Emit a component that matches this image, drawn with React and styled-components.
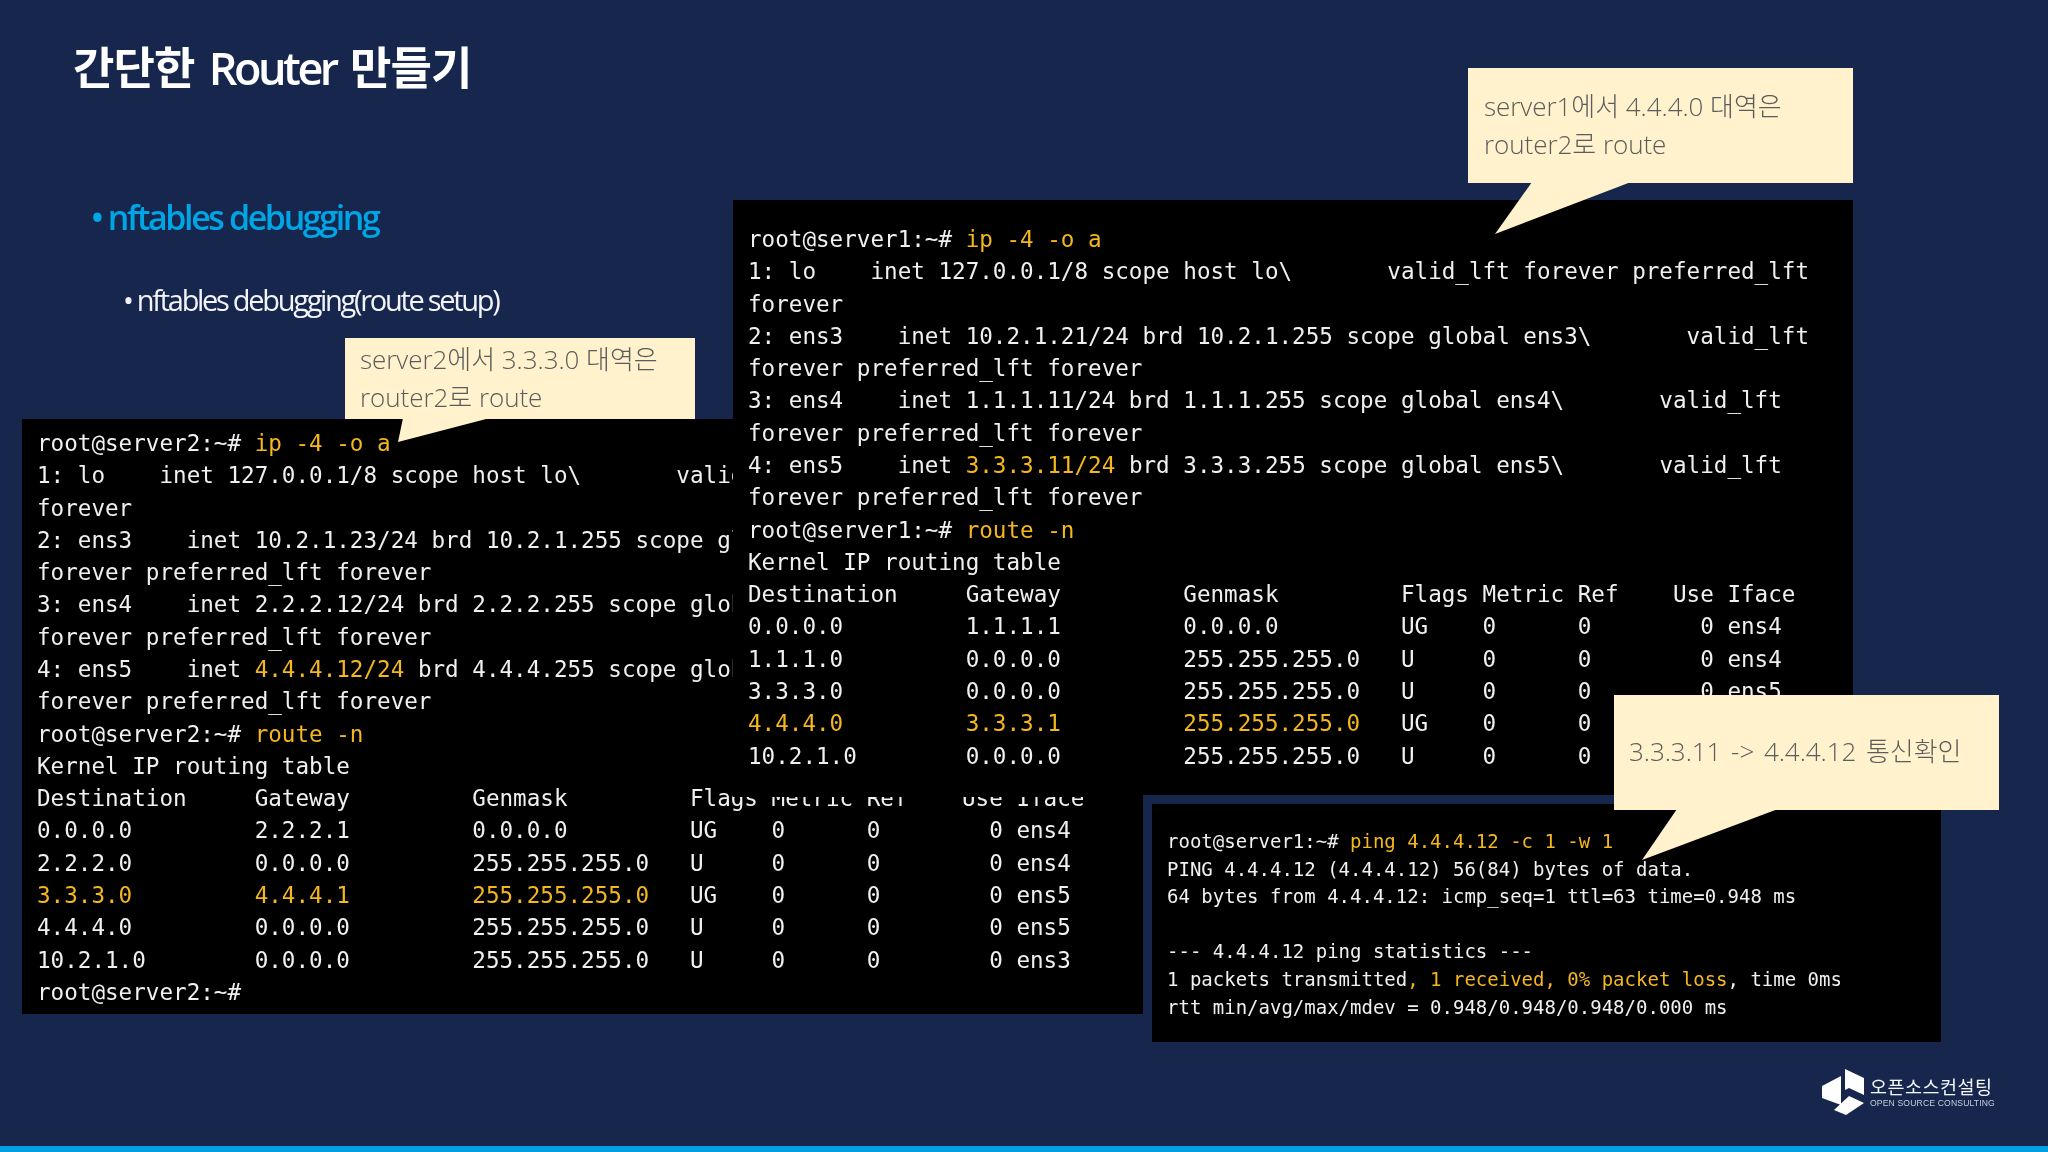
import React from "react";
import styled, { createGlobalStyle } from "styled-components";

const Global = createGlobalStyle`
  html, body { margin: 0; padding: 0; background: #16264c; }
`;

const Slide = styled.div`
  position: relative;
  width: 2048px;
  height: 1152px;
  overflow: hidden;
  display: flex;
  flex-direction: column;
  background: #16264c;
  font-family: "Open Sans", "Noto Sans CJK KR", sans-serif;
  filter: blur(0.3px);
`;

const Title = styled.h1`
  margin: 38px 0 0 73px;
  font-family: "Open Sans", "Noto Sans CJK KR", sans-serif;
  font-size: 45px;
  line-height: 60px;
  font-weight: 600;
  letter-spacing: -0.9px;
  word-spacing: 3.5px;
  color: #fff;
`;

const TitleLatin = styled.span`
  letter-spacing: -3.5px;
`;

const Bullets = styled.ul`
  list-style: none;
  margin: 0;
  padding: 0;
  display: flex;
  flex-direction: column;
`;

const Lead = styled.li`
  margin: 96px 0 0 91px;
  font-size: 34px;
  line-height: 46px;
  font-weight: 600;
  letter-spacing: -2.4px;
  color: #00a5e6;
`;

const Sub = styled.li`
  margin: 38px 0 0 123px;
  font-size: 29px;
  line-height: 44px;
  font-weight: 400;
  letter-spacing: -2.3px;
  color: #f2f4f8;
`;

const Terminal = styled.pre`
  position: absolute;
  margin: 0;
  box-sizing: border-box;
  overflow: hidden;
  background: #000;
  color: #f0f0f0;
  font-family: "DejaVu Sans Mono", monospace;
  font-size: 22.6px;
  line-height: 32.28px;
`;

const RouterWindow = styled(Terminal)`
  left: 22px;
  top: 419px;
  width: 1121px;
  height: 595px;
  padding: 8px 0 0 15px;
  z-index: 1;
`;

const ServerWindow = styled(Terminal)`
  left: 733px;
  top: 200px;
  width: 1120px;
  height: 597px;
  padding: 23px 0 0 15px;
  z-index: 3;
`;

const PingWindow = styled(Terminal)`
  left: 1143px;
  top: 795px;
  width: 798px;
  height: 247px;
  padding: 24px 0 0 15px;
  border-style: solid;
  border-color: #16264c;
  border-width: 9px 0 0 9px;
  font-size: 19px;
  line-height: 27.6px;
  z-index: 5;
`;

const Hi = styled.span`
  color: #f4b71e;
`;

const Callout = styled.div`
  position: absolute;
  box-sizing: border-box;
  background: #fff2cc;
  color: #5c5c5c;
  font-size: 26px;
  font-weight: 300;
  letter-spacing: -0.05px;
  line-height: 37.5px;
`;

const CalloutLeft = styled(Callout)`
  left: 345px;
  top: 338px;
  width: 350px;
  height: 81px;
  padding: 3px 0 0 15px;
  z-index: 2;
`;

const CalloutTop = styled(Callout)`
  left: 1468px;
  top: 68px;
  width: 385px;
  height: 115px;
  padding: 20px 0 0 16px;
  z-index: 4;
`;

const CalloutPing = styled(Callout)`
  left: 1614px;
  top: 695px;
  width: 385px;
  height: 115px;
  padding: 38px 0 0 15px;
  word-spacing: 3px;
  z-index: 6;
`;

const Tail = styled.svg`
  position: absolute;
  left: 0;
  top: 0;
  overflow: visible;
  pointer-events: none;
`;

const Footer = styled.div`
  margin-top: auto;
  display: flex;
  flex-direction: column;
`;

const LogoRow = styled.div`
  align-self: flex-end;
  display: flex;
  align-items: center;
  gap: 6px;
  margin: 0 53px 31px 0;
  position: relative;
  z-index: 7;
`;

const LogoText = styled.div`
  display: flex;
  flex-direction: column;
  color: #f4f6fa;
  width: 125px;
`;

const LogoKo = styled.span`
  font-family: "Noto Sans CJK KR", sans-serif;
  font-size: 18.5px;
  line-height: 23px;
  letter-spacing: 0.5px;
  white-space: nowrap;
`;

const LogoEn = styled.span`
  font-family: "Liberation Sans", sans-serif;
  font-size: 8.6px;
  line-height: 11px;
  letter-spacing: 0.15px;
  color: #c6cedb;
  white-space: nowrap;
`;

const BottomBar = styled.div`
  height: 6px;
  background: #00a0e3;
`;

const Logo = () => (
  <svg width="42" height="46" viewBox="0 0 42 46">
    <path fill="#fff" d="M0 17 L19 7 L19 36 L0 29 Z" />
    <path fill="#fff" d="M23 0 L42 9 L42 26 L27 19 L23 21 Z" />
    <path fill="#fff" d="M12 41 L27 27 L42 34 L24 46 Z" />
  </svg>
);

const router = (
  <>
    root@server2:~# <Hi>ip -4 -o a</Hi>{"\n"}
    {"1: lo    inet 127.0.0.1/8 scope host lo\\       valid_lft\n"}
    {"forever\n"}
    {"2: ens3    inet 10.2.1.23/24 brd 10.2.1.255 scope global ens3\\\n"}
    {"forever preferred_lft forever\n"}
    {"3: ens4    inet 2.2.2.12/24 brd 2.2.2.255 scope global ens4\\\n"}
    {"forever preferred_lft forever\n"}
    {"4: ens5    inet "}<Hi>4.4.4.12/24</Hi>{" brd 4.4.4.255 scope global ens5\\\n"}
    {"forever preferred_lft forever\n"}
    root@server2:~# <Hi>route -n</Hi>{"\n"}
    {"Kernel IP routing table\n"}
    {"Destination     Gateway         Genmask         Flags Metric Ref    Use Iface\n"}
    {"0.0.0.0         2.2.2.1         0.0.0.0         UG    0      0        0 ens4\n"}
    {"2.2.2.0         0.0.0.0         255.255.255.0   U     0      0        0 ens4\n"}
    <Hi>3.3.3.0         4.4.4.1         255.255.255.0</Hi>{"   UG    0      0        0 ens5\n"}
    {"4.4.4.0         0.0.0.0         255.255.255.0   U     0      0        0 ens5\n"}
    {"10.2.1.0        0.0.0.0         255.255.255.0   U     0      0        0 ens3\n"}
    {"root@server2:~#"}
  </>
);

const server = (
  <>
    root@server1:~# <Hi>ip -4 -o a</Hi>{"\n"}
    {"1: lo    inet 127.0.0.1/8 scope host lo\\       valid_lft forever preferred_lft\n"}
    {"forever\n"}
    {"2: ens3    inet 10.2.1.21/24 brd 10.2.1.255 scope global ens3\\       valid_lft\n"}
    {"forever preferred_lft forever\n"}
    {"3: ens4    inet 1.1.1.11/24 brd 1.1.1.255 scope global ens4\\       valid_lft\n"}
    {"forever preferred_lft forever\n"}
    {"4: ens5    inet "}<Hi>3.3.3.11/24</Hi>{" brd 3.3.3.255 scope global ens5\\       valid_lft\n"}
    {"forever preferred_lft forever\n"}
    root@server1:~# <Hi>route -n</Hi>{"\n"}
    {"Kernel IP routing table\n"}
    {"Destination     Gateway         Genmask         Flags Metric Ref    Use Iface\n"}
    {"0.0.0.0         1.1.1.1         0.0.0.0         UG    0      0        0 ens4\n"}
    {"1.1.1.0         0.0.0.0         255.255.255.0   U     0      0        0 ens4\n"}
    {"3.3.3.0         0.0.0.0         255.255.255.0   U     0      0        0 ens5\n"}
    <Hi>4.4.4.0         3.3.3.1         255.255.255.0</Hi>{"   UG    0      0        0 ens5\n"}
    {"10.2.1.0        0.0.0.0         255.255.255.0   U     0      0        0 ens3"}
  </>
);

const ping = (
  <>
    root@server1:~# <Hi>ping 4.4.4.12 -c 1 -w 1</Hi>{"\n"}
    {"PING 4.4.4.12 (4.4.4.12) 56(84) bytes of data.\n"}
    {"64 bytes from 4.4.4.12: icmp_seq=1 ttl=63 time=0.948 ms\n"}
    {"\n"}
    {"--- 4.4.4.12 ping statistics ---\n"}
    1 packets transmitted<Hi>, 1 received, 0% packet loss</Hi>, time 0ms{"\n"}
    {"rtt min/avg/max/mdev = 0.948/0.948/0.948/0.000 ms"}
  </>
);

export default function App() {
  return (
    <Slide>
      <Global />
      <Title>간단한 <TitleLatin>Router</TitleLatin> 만들기</Title>
      <Bullets>
        <Lead>• nftables debugging</Lead>
        <Sub>• nftables debugging(route setup)</Sub>
      </Bullets>

      <RouterWindow>{router}</RouterWindow>
      <ServerWindow>{server}</ServerWindow>
      <PingWindow>{ping}</PingWindow>

      <CalloutLeft>
        server2에서 3.3.3.0 대역은<br />router2로 route
        <Tail width="1" height="1"><polygon points="58,80 145,80 53,104" fill="#fff2cc" /></Tail>
      </CalloutLeft>
      <CalloutTop>
        server1에서 4.4.4.0 대역은<br />router2로 route
        <Tail width="1" height="1"><polygon points="64,114 163,114 27,166" fill="#fff2cc" /></Tail>
      </CalloutTop>
      <CalloutPing>
        3.3.3.11 -&gt; 4.4.4.12 통신확인
        <Tail width="1" height="1"><polygon points="63,114 164,114 28,165" fill="#fff2cc" /></Tail>
      </CalloutPing>

      <Footer>
        <LogoRow>
          <Logo />
          <LogoText>
            <LogoKo>오픈소스컨설팅</LogoKo>
            <LogoEn>OPEN SOURCE CONSULTING</LogoEn>
          </LogoText>
        </LogoRow>
        <BottomBar />
      </Footer>
    </Slide>
  );
}
